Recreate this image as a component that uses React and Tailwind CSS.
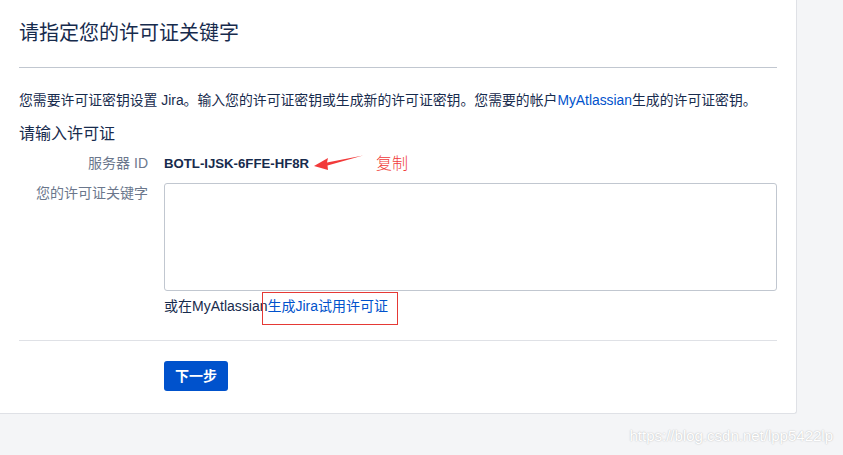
import React from 'react';

const font = "font-['Liberation_Sans','Noto_Sans_CJK_SC',sans-serif]";

const FormRow = ({ label, children, alignTop }) => (
  <div className={`flex ${alignTop ? 'items-start' : 'items-center'}`}>
    <div className="w-[129px] shrink-0 text-right text-[14px] text-[#6b778c]">{label}</div>
    <div className="ml-[16px] flex-1">{children}</div>
  </div>
);

const App = () => {
  return (
    <div className={`w-[843px] h-[455px] bg-[#f4f5f7] relative overflow-hidden ${font}`}>
      <div className="w-[797px] h-[414px] bg-white border-r border-b border-[#dfe1e6] rounded-br-[3px] px-[19px]">
        <h1 className="pt-[20px] text-[20px] leading-[26px] text-[#172b4d] font-normal">请指定您的许可证关键字</h1>
        <div className="mt-[21px] w-[758px] border-t border-[#c1c7d0]" />

        <p className="mt-[22px] text-[13.85px] leading-[20px] text-[#172b4d] whitespace-nowrap">
          您需要许可证密钥设置 Jira。输入您的许可证密钥或生成新的许可证密钥。您需要的帐户
          <a className="text-[#0052cc]">MyAtlassian</a>生成的许可证密钥。
        </p>

        <h2 className="mt-[14px] text-[16px] leading-[20px] text-[#172b4d] font-normal">请输入许可证</h2>

        <div className="mt-[9px] w-[758px] flex flex-col">
          <FormRow label="服务器 ID">
            <div className="flex items-center h-[20px]">
              <span className="text-[13.2px] font-bold text-[#172b4d]">BOTL-IJSK-6FFE-HF8R</span>
              <svg width="50" height="16" viewBox="0 0 50 16" className="ml-[5px] mt-[-2px]">
                <path d="M0 11 L14 3 L13 7.5 L49 0.5 L13.5 10.5 L14 15 Z" fill="#f23a3a" />
              </svg>
              <span className="ml-[12px] text-[16px] text-[#f03a3a] font-light">复制</span>
            </div>
          </FormRow>

          <div className="mt-[9px]">
            <FormRow label="您的许可证关键字" alignTop>
              <textarea className="block w-[613px] h-[108px] border border-[#c1c7d0] rounded-[3px] resize-none outline-none" />
            </FormRow>
          </div>

          <div className="mt-[5px]">
            <FormRow label="">
              <div className="text-[14px] leading-[20px] text-[#172b4d] whitespace-nowrap">
                或在MyAtlassian
                <span className="relative">
                  <a className="text-[#0052cc]">生成Jira试用许可证</a>
                  <span className="absolute left-[-5px] top-[-6px] w-[136px] h-[33px] border border-[#e53935]" />
                </span>
              </div>
            </FormRow>
          </div>
        </div>

        <div className="mt-[24px] w-[758px] border-t border-[#dfe1e6]" />

        <div className="mt-[20px] ml-[145px]">
          <button className="w-[64px] h-[30px] bg-[#0052cc] text-white text-[14px] font-bold rounded-[3px]">下一步</button>
        </div>
      </div>

      <div className="absolute right-[10px] bottom-[8px] text-[15px] text-white [text-shadow:0_0_1.5px_rgba(0,0,0,0.3)] font-['Liberation_Sans',sans-serif]">
        https://blog.csdn.net/lpp5422lp
      </div>
    </div>
  );
};

export default App;
